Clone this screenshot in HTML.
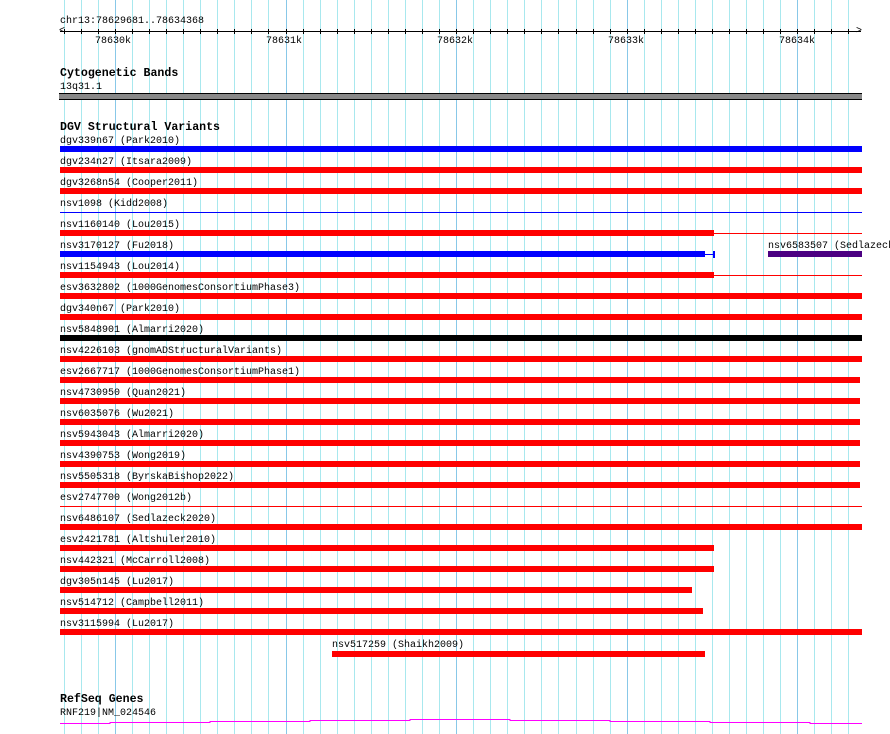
<!DOCTYPE html>
<html><head><meta charset="utf-8"><style>
body{margin:0;width:890px;height:734px;background:#fff;position:relative;overflow:hidden;font-family:"Liberation Mono","DejaVu Sans Mono",monospace;font-size:10px;color:#000}
.g{position:absolute;top:0;width:1px;height:734px;background:#a8e8ee}
.G{background:#88c8e8}
.t{position:absolute;white-space:pre;line-height:11px}
.b{position:absolute;font-weight:bold;font-size:11.6px;white-space:pre}
.r{position:absolute;height:6px}
.l{position:absolute;height:1px}
</style></head><body>
<div id="grid"></div>
<script>
var s='';for(var k=-3;k<44;k++){var x=114.9+k*17.06;if(x<58||x>864)continue;s+='<div class="g'+(k%10==0?' G':'')+'" style="left:'+Math.round(x)+'px"></div>';}
document.getElementById('grid').innerHTML=s;
</script>
<div class="t" style="left:60px;top:16px">chr13:78629681..78634368</div>
<div style="position:absolute;left:60px;top:31px;width:801px;height:1px;background:#000"></div>
<div class="t" style="left:59px;top:26px;font-size:10px">&lt;</div>
<div class="t" style="left:856px;top:26px;font-size:10px">&gt;</div>
<div id="ticks"></div>
<script>
var s='';for(var k=-3;k<44;k++){var x=114.9+k*17.06;if(x<62||x>860)continue;s+='<div style="position:absolute;left:'+Math.round(x)+'px;top:29px;width:1px;height:5px;background:#000"></div>';}
document.getElementById('ticks').innerHTML=s;
</script>
<div class="t" style="left:95px;top:36px">78630k</div>
<div class="t" style="left:266px;top:36px">78631k</div>
<div class="t" style="left:437px;top:36px">78632k</div>
<div class="t" style="left:608px;top:36px">78633k</div>
<div class="t" style="left:779px;top:36px">78634k</div>
<div class="b" style="left:60px;top:67px">Cytogenetic Bands</div>
<div class="t" style="left:60px;top:82px">13q31.1</div>
<div style="position:absolute;left:59px;top:93px;width:803px;height:5px;background:#888;border-top:1px solid #000;border-bottom:1px solid #000"></div>
<div class="b" style="left:60px;top:121px">DGV Structural Variants</div>
<div id="rows"></div>
<script>
var R=[["dgv339n67 (Park2010)","#0000ff",862,0],["dgv234n27 (Itsara2009)","red",862,0],["dgv3268n54 (Cooper2011)","red",862,0],["nsv1098 (Kidd2008)","#0000ff",0,862],["nsv1160140 (Lou2015)","red",714,862],["nsv3170127 (Fu2018)","#0000ff",705,714],["nsv1154943 (Lou2014)","red",714,862],["esv3632802 (1000GenomesConsortiumPhase3)","red",862,0],["dgv340n67 (Park2010)","red",862,0],["nsv5848901 (Almarri2020)","#000",862,0],["nsv4226103 (gnomADStructuralVariants)","red",862,0],["esv2667717 (1000GenomesConsortiumPhase1)","red",860,0],["nsv4730950 (Quan2021)","red",860,0],["nsv6035076 (Wu2021)","red",860,0],["nsv5943043 (Almarri2020)","red",860,0],["nsv4390753 (Wong2019)","red",860,0],["nsv5505318 (ByrskaBishop2022)","red",860,0],["esv2747700 (Wong2012b)","red",0,862],["nsv6486107 (Sedlazeck2020)","red",862,0],["esv2421781 (Altshuler2010)","red",714,0],["nsv442321 (McCarroll2008)","red",714,0],["dgv305n145 (Lu2017)","red",692,0],["nsv514712 (Campbell2011)","red",703,0],["nsv3115994 (Lu2017)","red",862,0]];
var s='';R.forEach(function(r,i){var y=146+21*i;s+='<div class="t" style="left:60px;top:'+(y-10)+'px">'+r[0]+'</div>';
if(r[2])s+='<div class="r" style="left:60px;top:'+y+'px;width:'+(r[2]-60)+'px;background:'+r[1]+'"></div>';
if(r[3]){var x0=r[2]||60;s+='<div class="l" style="left:'+x0+'px;top:'+(y+3)+'px;width:'+(r[3]-x0)+'px;background:'+r[1]+'"></div>';}
});
s+='<div style="position:absolute;left:713px;top:251px;width:2px;height:7px;background:#0000ff"></div>';
s+='<div class="t" style="left:768px;top:241px">nsv6583507 (Sedlazeck</div>';
s+='<div class="r" style="left:768px;top:251px;width:94px;background:#4b0082"></div>';
s+='<div class="t" style="left:332px;top:640px">nsv517259 (Shaikh2009)</div>';
s+='<div class="r" style="left:332px;top:651px;width:373px;background:red"></div>';
document.getElementById('rows').innerHTML=s;
</script>
<div class="b" style="left:60px;top:693px">RefSeq Genes</div>
<div class="t" style="left:60px;top:708px">RNF219|NM_024546</div>
<svg style="position:absolute;left:0;top:0" width="890" height="734"><polyline fill="none" stroke="#f0f" stroke-width="1" points="60,723.5 110,723.5 110,722.5 210,722.5 210,721.5 310,721.5 310,720.5 410,720.5 410,719.5 510,719.5 510,720.5 610,720.5 610,721.5 710,721.5 710,722.5 810,722.5 810,723.5 862,723.5"/></svg>
</body></html>
